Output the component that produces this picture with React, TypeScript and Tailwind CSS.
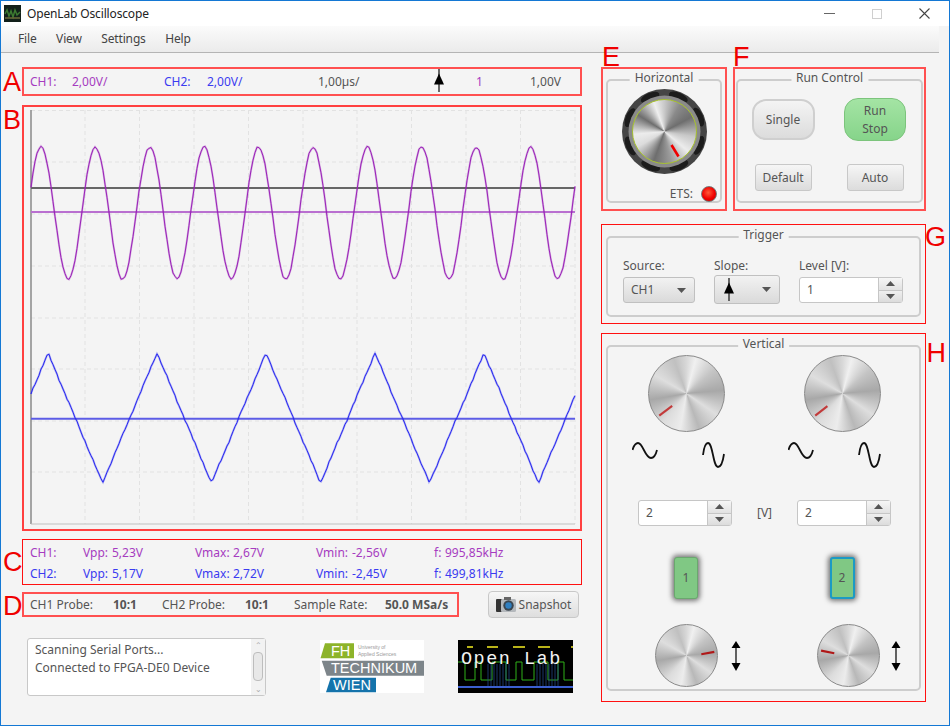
import type { ReactNode } from "react";

const PURPLE = "text-[#a63cc0]";
const BLUE = "text-[#3b3bf0]";

function noise(i: number, seed: number) {
  return (
    Math.sin(i * 1.7 + seed) * 0.6 +
    Math.sin(i * 0.53 + seed * 2.3) * 0.5 +
    Math.sin(i * 3.1 + seed * 0.7) * 0.4
  );
}

function sineTrace() {
  const pts: string[] = [];
  for (let i = 0; i <= 272; i++) {
    const x = 31 + i * 2;
    const y = 213 - 66 * Math.cos(((x - 41) / 54.4) * Math.PI * 2) + noise(i, 1.2);
    pts.push(`${x},${y.toFixed(1)}`);
  }
  return pts.join(" ");
}

function triangleTrace() {
  const pts: string[] = [];
  for (let i = 0; i <= 272; i++) {
    const x = 31 + i * 2;
    const p = (((x - 48) % 109) + 109) % 109;
    const t = p < 54.5 ? p / 54.5 : (109 - p) / 54.5;
    const y = 353 + t * 130 + noise(i, 2.6) * 0.9;
    pts.push(`${x},${y.toFixed(1)}`);
  }
  return pts.join(" ");
}

function Letter({ children, className }: { children: ReactNode; className: string }) {
  return (
    <span className={`absolute font-['Liberation_Sans',sans-serif] text-[27px] leading-none text-[#f00000] ${className}`}>
      {children}
    </span>
  );
}

function GroupBox({ title, className, children }: { title: string; className: string; children: ReactNode }) {
  return (
    <div className={`relative rounded-[5px] border-2 border-[#cdcdcd] ${className}`}>
      <span className="absolute left-1/2 top-[-11px] -translate-x-1/2 whitespace-nowrap bg-[#f4f4f4] px-[5px] text-[12px] leading-[16px] text-[#555]">
        {title}
      </span>
      {children}
    </div>
  );
}

function Triangle({ down, className }: { down?: boolean; className?: string }) {
  return (
    <svg width="9" height="5" viewBox="0 0 9 5" className={className}>
      <path d={down ? "M0 0H9L4.5 5Z" : "M0 5H9L4.5 0Z"} fill="#555" />
    </svg>
  );
}

function Spinner({ value, className }: { value: string; className: string }) {
  return (
    <div className={`flex h-[26px] rounded-[3px] border border-[#c6c6c6] bg-white ${className}`}>
      <div className="flex-1 pl-[7px] text-[12px] leading-[24px] text-[#555]">{value}</div>
      <div className="flex w-[24px] flex-col border-l border-[#c6c6c6]">
        <div className="flex flex-1 items-center justify-center border-b border-[#c6c6c6] bg-gradient-to-b from-[#f6f6f6] to-[#e2e2e2]">
          <Triangle />
        </div>
        <div className="flex flex-1 items-center justify-center bg-gradient-to-b from-[#efefef] to-[#dcdcdc]">
          <Triangle down />
        </div>
      </div>
    </div>
  );
}

function SlopeIcon({ className }: { className?: string }) {
  return (
    <svg width="12" height="23" viewBox="0 0 12 23" className={className}>
      <path d="M6 0V23" stroke="#444" strokeWidth="1.6" />
      <path d="M6 4.5L11 15.5H1Z" fill="#000" />
    </svg>
  );
}

function MetalKnob({
  size,
  sizeClass,
  needle,
  stroke,
}: {
  size: number;
  sizeClass: string;
  needle: [number, number, number, number];
  stroke: string;
}) {
  return (
    <div
      className={`relative rounded-full border border-[#8a8a8a] bg-[conic-gradient(#d8d8d8_0deg,#f0f0f0_15deg,#c4c4c4_50deg,#a8a8a8_85deg,#dedede_125deg,#b8b8b8_160deg,#ececec_190deg,#dcdcdc_220deg,#a8a8a8_260deg,#dedede_300deg,#c0c0c0_340deg,#d8d8d8_360deg)] ${sizeClass}`}
    >
      <svg
        viewBox={`${-size / 2} ${-size / 2} ${size} ${size}`}
        className="absolute inset-0 h-full w-full"
      >
        <line x1={needle[0]} y1={needle[1]} x2={needle[2]} y2={needle[3]} stroke={stroke} strokeWidth="2.2" />
      </svg>
    </div>
  );
}

function HorizontalKnob() {
  const blobs = [22, 67, 112, 157, 202, 247, 292, 337];
  return (
    <div className="relative h-[85px] w-[85px]">
      <svg viewBox="-42.5 -42.5 85 85" className="h-full w-full">
        <circle r="42.5" fill="#454545" />
        {blobs.map((a) => (
          <ellipse key={a} cx="0" cy="-37" rx="10" ry="4.5" fill="#1c1c1c" transform={`rotate(${a})`} />
        ))}
        <circle r="36" fill="#8a8a8a" />
      </svg>
      <div className="absolute inset-[10px] rounded-full border-[1.5px] border-[#a8c42c] bg-[conic-gradient(#c8c8c8_0deg,#8a8a8a_30deg,#6e6e6e_62deg,#c8c8c8_100deg,#ececec_130deg,#9a9a9a_168deg,#6e6e6e_200deg,#dcdcdc_240deg,#ececec_265deg,#6e6e6e_302deg,#efefef_340deg,#c8c8c8_360deg)]" />
      <svg viewBox="-42.5 -42.5 85 85" className="absolute inset-0 h-full w-full">
        <line x1="7" y1="13.5" x2="14" y2="25" stroke="#f00000" strokeWidth="2.6" />
      </svg>
    </div>
  );
}

function SineIcons() {
  return (
    <svg width="94" height="27" viewBox="0 0 94 27" className="mr-[14px]">
      <path
        d="M0.5 8C2 3 4 1 6 1C11 1 13 16 19 16C22 16 24 12 25 8"
        fill="none"
        stroke="#111"
        strokeWidth="1.8"
      />
      <path
        d="M71 13C72 5 74 1 76 1C81 1 81 25 86 25C89 25 91 19 92 12"
        fill="none"
        stroke="#111"
        strokeWidth="1.8"
      />
    </svg>
  );
}

function DoubleArrow() {
  return (
    <svg width="12" height="30" viewBox="0 0 12 30">
      <path d="M6 4V26" stroke="#222" strokeWidth="1.4" />
      <path d="M6 0L10.5 7H1.5Z M6 30L10.5 22H1.5Z" fill="#000" />
    </svg>
  );
}

function FhLogo() {
  return (
    <svg width="104" height="53" viewBox="0 0 104 53" className="bg-white">
      <path d="M5 3.3H34V18.3H0.5Z" fill="#8db42a" />
      <text x="11" y="16" fill="#fff" fontSize="14.5" fontFamily="Liberation Sans, sans-serif">FH</text>
      <text x="38" y="9" fill="#999" fontSize="5" fontFamily="Liberation Sans, sans-serif">University of</text>
      <text x="38" y="15.5" fill="#999" fontSize="5" fontFamily="Liberation Sans, sans-serif">Applied Sciences</text>
      <path d="M1.7 20.7H104V35.7H6.7Z" fill="#7d858a" />
      <text x="11" y="33" fill="#fff" fontSize="14.5" fontFamily="Liberation Sans, sans-serif">TECHNIKUM</text>
      <path d="M10.7 37.7H56V52.3H6Z" fill="#1473ab" />
      <text x="13" y="50" fill="#fff" fontSize="14.5" fontFamily="Liberation Sans, sans-serif">WIEN</text>
    </svg>
  );
}

function OpenLabLogo() {
  const tops: [number, number][] = [
    [9, 15],
    [29, 40],
    [55, 67],
    [80, 92],
    [113, 115],
  ];
  const strands = [30, 33, 36, 39, 42, 45, 48, 51, 79, 82, 85, 88, 91, 94, 97, 100];
  return (
    <svg width="115" height="53" viewBox="0 0 115 53" className="bg-black">
      {tops.map(([a, b]) => (
        <path key={a} d={`M${a} 7H${b}`} stroke="#e8e020" strokeWidth="1.6" />
      ))}
      <path
        d="M0 22H7V40H17V22H23V40H34V22H48V40H58V22H64V40H76V22H90V40H100V22H106V40H115"
        fill="none"
        stroke="#2fb018"
        strokeWidth="1"
      />
      {strands.map((x) => (
        <path key={x} d={`M${x} 24V46`} stroke="#24488c" strokeWidth="1" opacity="0.75" />
      ))}
      <path d="M0 47H115" stroke="#3c5fd0" strokeWidth="2" />
      <text x="3" y="24" fill="#f2f2f2" fontSize="18.5" letterSpacing="1.5" fontFamily="Liberation Mono, monospace">Open Lab</text>
    </svg>
  );
}

function CameraIcon() {
  return (
    <svg width="20" height="15" viewBox="0 0 20 15">
      <rect x="0" y="2" width="6" height="13" rx="1" fill="#333" />
      <rect x="5" y="2" width="15" height="13" rx="1.5" fill="#b4b8bc" />
      <rect x="8" y="0" width="7" height="3" fill="#666" />
      <circle cx="12.5" cy="8.5" r="5.2" fill="#3b4650" />
      <circle cx="12.5" cy="8.5" r="3.2" fill="#2f7fc0" />
    </svg>
  );
}

export default function App() {
  return (
    <div className="relative h-[726px] w-[950px] overflow-hidden border border-[#1478d4] bg-[#f4f4f4] font-['Noto_Sans',sans-serif] text-[12px] text-[#555]">
      {/* title bar */}
      <div className="flex h-[25px] items-center bg-white pl-[3px] pr-[19px]">
        <svg width="17" height="17" viewBox="0 0 17 17" className="bg-[#12201a]">
          <path d="M1 9L3 5L5 11L7 6L9 12L11 5L13 10L16 7" fill="none" stroke="#3c7a30" strokeWidth="1.5" />
          <path d="M1 13H16" stroke="#6b6b38" strokeWidth="1.5" />
        </svg>
        <span className="ml-[6px] tracking-[-0.15px] text-[#222]">OpenLab Oscilloscope</span>
        <div className="ml-auto flex items-center gap-[37px]">
          <div className="h-[1.5px] w-[11px] bg-[#666]" />
          <div className="h-[10px] w-[10px] border border-[#cfcfcf]" />
          <svg width="11" height="11" viewBox="0 0 11 11">
            <path d="M0.5 0.5L10.5 10.5M10.5 0.5L0.5 10.5" stroke="#444" strokeWidth="1.1" />
          </svg>
        </div>
      </div>

      {/* menu bar */}
      <div className="mr-[10px] flex h-[27px] items-center gap-[19.5px] border-b border-[#b4b4b4] bg-gradient-to-b from-[#fbfbfb] to-[#ebebeb] pl-[17px] tracking-[-0.15px] text-[#444]">
        <span>File</span>
        <span>View</span>
        <span>Settings</span>
        <span>Help</span>
      </div>

      <div className="flex pl-[21px] pt-[14px]">
        {/* left column */}
        <div className="w-[560px]">
          <div className="relative flex h-[29px] items-center border-2 border-[#ff5050] pl-[6px]">
            <Letter className="left-[-21px] top-0">A</Letter>
            <span className={`w-[42px] ${PURPLE}`}>CH1:</span>
            <span className={`w-[92px] ${PURPLE}`}>2,00V/</span>
            <span className={`w-[43px] ${BLUE}`}>CH2:</span>
            <span className={`w-[111px] ${BLUE}`}>2,00V/</span>
            <span className="w-[115px]">1,00µs/</span>
            <SlopeIcon className="-mt-[3px] w-[12px]" />
            <span className={`ml-[31px] w-[54px] ${PURPLE}`}>1</span>
            <span>1,00V</span>
          </div>

          <div className="relative mt-[9px] h-[426px] border-2 border-[#ff4040]">
            <Letter className="left-[-21px] top-0">B</Letter>
            <svg width="556" height="422" viewBox="24 107 556 422" className="block">
              <g stroke="#e2e2e2" strokeWidth="1" strokeDasharray="4 3">
                {[85, 139.5, 194, 248.5, 303, 357, 411.5, 466, 520.5, 575].map((x) => (
                  <line key={x} x1={x} y1="110" x2={x} y2="524" />
                ))}
                {[110.5, 162, 214, 266, 318, 369, 421, 472].map((y) => (
                  <line key={y} x1="31" y1={y} x2="575" y2={y} />
                ))}
              </g>
              <line x1="31" y1="110" x2="31" y2="524" stroke="#8a8a8a" strokeWidth="1.5" />
              <line x1="31" y1="524" x2="575" y2="524" stroke="#c0c0c0" strokeWidth="1.2" />
              <line x1="31" y1="188" x2="575" y2="188" stroke="#666" strokeWidth="1.8" />
              <line x1="31" y1="212" x2="575" y2="212" stroke="#b96fd0" strokeWidth="2" />
              <line x1="31" y1="418.7" x2="575" y2="418.7" stroke="#5c5ce6" strokeWidth="2" />
              <polyline points={sineTrace()} fill="none" stroke="#9a22b8" strokeWidth="2" opacity="0.35" />
              <polyline points={sineTrace()} fill="none" stroke="#9a22b8" strokeWidth="1" />
              <polyline points={triangleTrace()} fill="none" stroke="#2a2af0" strokeWidth="2" opacity="0.35" />
              <polyline points={triangleTrace()} fill="none" stroke="#2a2af0" strokeWidth="1" />
            </svg>
          </div>

          <div className="relative mt-[8px] grid h-[46px] grid-cols-[53px_29px_83px_38px_83px_36px_82px_11px_1fr] items-center border border-[#ff1010] pl-[7px] pt-[3px]">
            <Letter className="left-[-20px] top-[9px]">C</Letter>
            <span className={PURPLE}>CH1:</span>
            <span className={PURPLE}>Vpp:</span>
            <span className={PURPLE}>5,23V</span>
            <span className={PURPLE}>Vmax:</span>
            <span className={PURPLE}>2,67V</span>
            <span className={PURPLE}>Vmin:</span>
            <span className={PURPLE}>-2,56V</span>
            <span className={PURPLE}>f:</span>
            <span className={PURPLE}>995,85kHz</span>
            <span className={BLUE}>CH2:</span>
            <span className={BLUE}>Vpp:</span>
            <span className={BLUE}>5,17V</span>
            <span className={BLUE}>Vmax:</span>
            <span className={BLUE}>2,72V</span>
            <span className={BLUE}>Vmin:</span>
            <span className={BLUE}>-2,45V</span>
            <span className={BLUE}>f:</span>
            <span className={BLUE}>499,81kHz</span>
          </div>

          <div className="mt-[6px] flex items-center">
            <div className="relative flex h-[25px] w-[437px] items-center border-2 border-[#ff5050] pl-[6px]">
              <Letter className="left-[-21px] top-[-1px]">D</Letter>
              <span className="w-[83px]">CH1 Probe:</span>
              <span className="w-[49px] font-bold">10:1</span>
              <span className="w-[83px]">CH2 Probe:</span>
              <span className="w-[49px] font-bold">10:1</span>
              <span className="w-[91px]">Sample Rate:</span>
              <span className="font-bold">50.0 MSa/s</span>
            </div>
            <button className="ml-[29px] flex h-[27px] w-[91px] items-center justify-center gap-[3px] rounded-[4px] border border-[#c8c8c8] bg-gradient-to-b from-[#f6f6f6] to-[#dedede] text-[#555]">
              <CameraIcon />
              Snapshot
            </button>
          </div>

          <div className="mt-[20px] flex items-start pl-[5px]">
            <div className="flex h-[58px] w-[239px] rounded-[3px] border border-[#c8c8c8] bg-white">
              <div className="flex-1 pl-[7px] pt-[2px] text-[12px] leading-[18px]">
                <div>Scanning Serial Ports...</div>
                <div>Connected to FPGA-DE0 Device</div>
              </div>
              <div className="flex w-[14px] flex-col items-center bg-[#f2f2f2]">
                <span className="h-[11px] text-[8px] leading-[11px] text-[#aaa]">⌃</span>
                <div className="mt-[2px] h-[29px] w-[10px] rounded-[4px] border border-[#bdbdbd] bg-[#e8e8e8]" />
                <span className="mt-auto h-[11px] text-[8px] leading-[9px] text-[#aaa]">⌄</span>
              </div>
            </div>
            <div className="ml-[54px] mt-[2px]">
              <FhLogo />
            </div>
            <div className="ml-[34px] mt-[2px]">
              <OpenLabLogo />
            </div>
          </div>
        </div>

        {/* right column */}
        <div className="ml-[19px] w-[325px]">
          <div className="flex gap-[6px]">
            <div className="relative h-[144px] w-[126px] border-2 border-[#ff5050] px-[3px] pb-[6px] pt-[10px]">
              <Letter className="left-[-1px] top-[-25px]">E</Letter>
              <GroupBox title="Horizontal" className="h-full">
                <div className="flex justify-center pt-[8px]">
                  <HorizontalKnob />
                </div>
                <div className="mr-[3px] mt-[11px] flex items-center justify-end gap-[8px]">
                  <span>ETS:</span>
                  <div className="h-[16px] w-[16px] rounded-full border border-[#777] bg-[radial-gradient(circle_at_45%_40%,#ff5a3a,#f00000_55%,#b80000)]" />
                </div>
              </GroupBox>
            </div>

            <div className="relative h-[144px] w-[193px] border-2 border-[#ff5050] px-[1px] pb-[6px] pt-[10px]">
              <Letter className="left-[-2px] top-[-25px]">F</Letter>
              <GroupBox title="Run Control" className="h-full">
                <div className="-ml-[1px] grid grid-cols-[92px_92px] justify-items-center pt-[18px]">
                  <button className="h-[41px] w-[63px] rounded-[14px] border-2 border-[#cfcfcf] bg-gradient-to-b from-[#f4f4f4] to-[#dcdcdc] text-[#555]">
                    Single
                  </button>
                  <button className="-mt-[1px] h-[43px] w-[62px] rounded-[14px] border border-[#7cc47c] bg-gradient-to-b from-[#a4e4a4] to-[#86d48a] leading-[18px] text-[#555]">
                    Run
                    <br />
                    Stop
                  </button>
                  <button className="mt-[23px] h-[27px] w-[57px] rounded-[3px] border border-[#c8c8c8] bg-gradient-to-b from-[#f6f6f6] to-[#dcdcdc] text-[#555]">
                    Default
                  </button>
                  <button className="mt-[23px] h-[27px] w-[57px] rounded-[3px] border border-[#c8c8c8] bg-gradient-to-b from-[#f6f6f6] to-[#dcdcdc] text-[#555]">
                    Auto
                  </button>
                </div>
              </GroupBox>
            </div>
          </div>

          <div className="relative mt-[13px] h-[100px] border border-[#ff1010] px-[4px] pb-[6px] pt-[11px]">
            <Letter className="right-[-21px] top-[-1px]">G</Letter>
            <GroupBox title="Trigger" className="h-full">
              <div className="flex pl-[15px] pt-[29px]">
                <div className="relative w-[91px]">
                  <span className="absolute top-[-9px] leading-[16px]">Source:</span>
                  <div className="mt-[10px] flex h-[26px] w-[72px] items-center justify-between rounded-[3px] border border-[#c0c0c0] bg-gradient-to-b from-[#f2f2f2] to-[#dadada] pl-[7px] pr-[8px]">
                    CH1
                    <Triangle down />
                  </div>
                </div>
                <div className="relative w-[85px]">
                  <span className="absolute top-[-9px] leading-[16px]">Slope:</span>
                  <div className="mt-[8px] flex h-[29px] w-[66px] items-center justify-between rounded-[3px] border border-[#c0c0c0] bg-gradient-to-b from-[#f2f2f2] to-[#dadada] pl-[8px] pr-[8px]">
                    <SlopeIcon />
                    <Triangle down />
                  </div>
                </div>
                <div className="relative">
                  <span className="absolute top-[-9px] whitespace-nowrap leading-[16px]">Level [V]:</span>
                  <Spinner value="1" className="mt-[10px] w-[104px]" />
                </div>
              </div>
            </GroupBox>
          </div>

          <div className="relative mt-[9px] h-[369px] border border-[#ff1010] px-[4px] pb-[10px] pt-[11px]">
            <Letter className="right-[-21px] top-[6px]">H</Letter>
            <GroupBox title="Vertical" className="h-full">
              <div className="grid grid-cols-[156px_156px] justify-items-center pt-[8px]">
                <MetalKnob size={77} sizeClass="h-[77px] w-[77px]" needle={[-14.7, 12.7, -28, 22.7]} stroke="#c23a3a" />
                <MetalKnob size={77} sizeClass="h-[77px] w-[77px]" needle={[-15.5, 13, -28, 22.7]} stroke="#c23a3a" />
                <div className="mt-[10px]">
                  <SineIcons />
                </div>
                <div className="mt-[10px]">
                  <SineIcons />
                </div>
              </div>
              <div className="mt-[31px] flex items-center pl-[30px]">
                <Spinner value="2" className="w-[94px]" />
                <span className="w-[65px] text-center">[V]</span>
                <Spinner value="2" className="w-[94px]" />
              </div>
              <div className="mt-[31px] grid grid-cols-[156px_156px] justify-items-center">
                <button className="h-[42px] w-[24px] rounded-[3px] border border-[#6aa86e] bg-[#80c884] text-[#555] shadow-[0_0_5px_2px_#777]">
                  1
                </button>
                <button className="h-[42px] w-[25px] rounded-[3px] border-2 border-[#1c9ac4] bg-[#80c884] text-[#555] shadow-[0_0_5px_2px_#777]">
                  2
                </button>
              </div>
              <div className="mt-[25px] flex items-center pl-[47px]">
                <MetalKnob size={63} sizeClass="h-[63px] w-[63px]" needle={[15.3, -1.3, 28.7, -3.7]} stroke="#b01818" />
                <div className="ml-[12px]">
                  <DoubleArrow />
                </div>
                <div className="ml-[75px]">
                  <MetalKnob size={63} sizeClass="h-[63px] w-[63px]" needle={[-14.7, -2.3, -28.3, -5]} stroke="#b01818" />
                </div>
                <div className="ml-[10px]">
                  <DoubleArrow />
                </div>
              </div>
            </GroupBox>
          </div>
        </div>
      </div>
    </div>
  );
}
